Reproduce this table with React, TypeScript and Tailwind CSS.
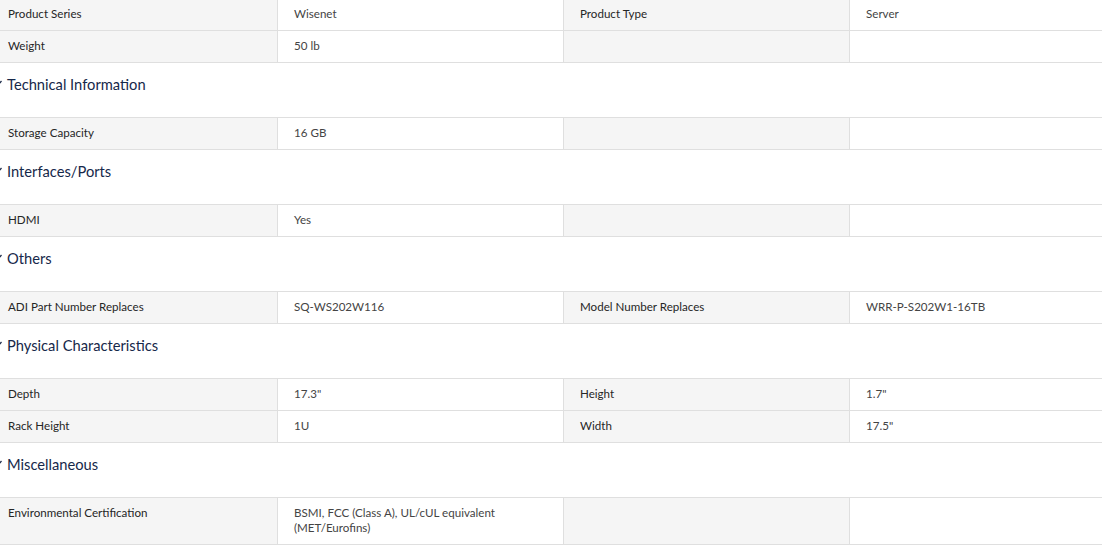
import React from "react";

type Row = [string, string, string, string];

const sections: { title?: string; rows: Row[] }[] = [
  {
    rows: [
      ["Product Series", "Wisenet", "Product Type", "Server"],
      ["Weight", "50 lb", "", ""],
    ],
  },
  { title: "Technical Information", rows: [["Storage Capacity", "16 GB", "", ""]] },
  { title: "Interfaces/Ports", rows: [["HDMI", "Yes", "", ""]] },
  {
    title: "Others",
    rows: [["ADI Part Number Replaces", "SQ-WS202W116", "Model Number Replaces", "WRR-P-S202W1-16TB"]],
  },
  {
    title: "Physical Characteristics",
    rows: [
      ["Depth", '17.3"', "Height", '1.7"'],
      ["Rack Height", "1U", "Width", '17.5"'],
    ],
  },
  {
    title: "Miscellaneous",
    rows: [["Environmental Certification", "BSMI, FCC (Class A), UL/cUL equivalent\n(MET/Eurofins)", "", ""]],
  },
];

function Heading({ title }: { title: string }) {
  return (
    <div className="h-[54px] pt-[12px] flex items-start gap-[5px]">
      <svg width="10" height="18" viewBox="0 0 10 18" className="shrink-0">
        <path d="M1 6.5 L5 11 L9.5 6" fill="none" stroke="#1b2a4a" strokeWidth="1.3" />
      </svg>
      <span className="text-[14.7px] leading-[18px] text-[#16284a]">{title}</span>
    </div>
  );
}

function Table({ rows }: { rows: Row[] }) {
  return (
    <div className="border-t border-[#dfdfdf]">
      {rows.map((r, i) => (
        <div key={i} className="grid grid-cols-[286px_286px_286px_286px] border-b border-[#dfdfdf]">
          {r.map((c, j) => (
            <div
              key={j}
              className={
                "px-4 pt-[7px] pb-[9px] text-[11.6px] leading-[15px] border-r border-[#dfdfdf] whitespace-pre-line " +
                (j % 2 === 0 ? "bg-[#f5f5f5] text-[#262626]" : "bg-white text-[#444444]")
              }
            >
              {c}
            </div>
          ))}
        </div>
      ))}
    </div>
  );
}

export default function App() {
  return (
    <div
      className="w-[1102px] h-[549px] overflow-hidden bg-white"
      style={{ fontFamily: "Lato, 'Noto Sans', sans-serif" }}
    >
      <div className="-ml-2 -mt-[2px] w-[1144px]">
        {sections.map((s, i) => (
          <div key={i}>
            {s.title && <Heading title={s.title} />}
            <Table rows={s.rows} />
          </div>
        ))}
      </div>
    </div>
  );
}
